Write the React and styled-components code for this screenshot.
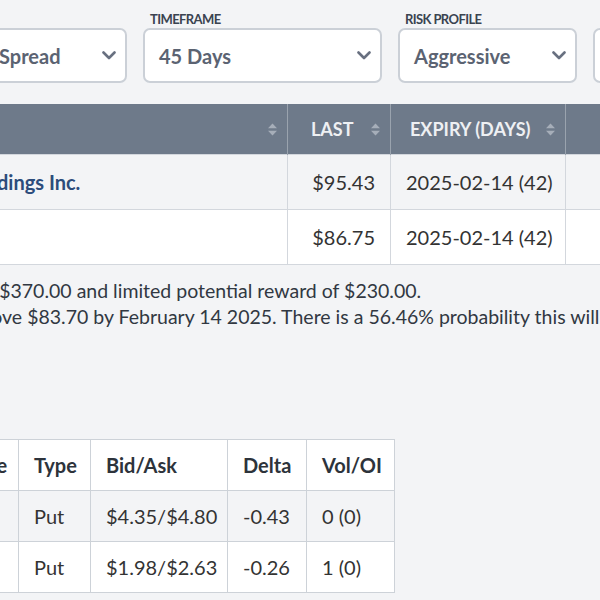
import React from "react";
import styled, { createGlobalStyle } from "styled-components";

const GlobalStyle = createGlobalStyle`
  html, body {
    margin: 0;
    padding: 0;
    background: #f3f4f6;
    overflow: hidden;
  }
  body {
    font-family: Lato, "Liberation Sans", sans-serif;
    color: #333a44;
  }
`;

const Page = styled.div`
  width: 1100px;
  margin-left: -92px;
  padding-top: 11px;
`;

// filters

const FilterRow = styled.div`
  display: flex;
  gap: 16px;
`;

const Field = styled.div`
  width: ${(p) => p.width}px;
  flex: none;
`;

const Label = styled.div`
  font-size: 13px;
  line-height: 16px;
  font-weight: 700;
  color: #3a4350;
  text-transform: uppercase;
  padding-left: 7px;
  height: 16px;
  letter-spacing: -0.6px;
`;

const Select = styled.div`
  margin-top: 1px;
  height: 55px;
  box-sizing: border-box;
  background: #fff;
  border: 2px solid #cbd0d7;
  border-radius: 7px;
  display: flex;
  align-items: center;
  justify-content: space-between;
  padding: 0 9px 0 14px;
  font-size: 20px;
  font-weight: 700;
  color: #5b6372;
  white-space: nowrap;
`;

const Chevron = () => (
  <svg width="14" height="9" viewBox="0 0 14 9">
    <polyline
      points="1.5,1.5 7,7 12.5,1.5"
      fill="none"
      stroke="#687080"
      strokeWidth="2.6"
      strokeLinecap="round"
      strokeLinejoin="round"
    />
  </svg>
);

// quote table

const Table = styled.table`
  border-collapse: collapse;
  table-layout: fixed;
  width: ${(p) => p.width}px;
  margin-top: ${(p) => p.top || 0}px;
  margin-left: ${(p) => p.left || 0}px;
  background: #fff;
`;

const HeadCell = styled.th`
  height: 50px;
  background: #6e7a8a;
  color: #eef0f3;
  font-size: 18px;
  font-weight: 700;
  text-transform: uppercase;
  text-align: left;
  padding: 0 10px 0 ${(p) => p.pad || 19}px;
  border-left: 1px solid #9aa3ae;
  white-space: nowrap;
`;

const HeadInner = styled.div`
  display: flex;
  align-items: center;
  justify-content: space-between;
`;

const SortIcon = () => (
  <svg width="9" height="13" viewBox="0 0 9 13">
    <polygon points="4.5,0.5 9,5.3 0,5.3" fill="#a6aeb9" />
    <polygon points="0,7.7 9,7.7 4.5,12.5" fill="#a6aeb9" />
  </svg>
);

const Row = styled.tr`
  background: ${(p) => (p.striped ? "#f3f4f6" : "#fff")};
  border-top: 1px solid #d3d7dd;
  border-bottom: 1px solid #d3d7dd;
`;

const Cell = styled.td`
  height: 54px;
  padding: 0 15px;
  font-size: 20px;
  color: #333;
  text-align: ${(p) => p.align || "left"};
  border-left: 1px solid #d3d7dd;
  white-space: nowrap;
  overflow: hidden;
`;

const Company = styled.span`
  color: #2c4c7b;
  font-weight: 700;
`;

// summary

const Summary = styled.div`
  margin-top: 13px;
  margin-left: -40px;
  font-size: 19.5px;
  line-height: 26px;
  color: #313842;
  white-space: nowrap;
`;

// legs table

const LegHead = styled.th`
  height: 50px;
  padding: 0 15px;
  text-align: left;
  font-size: 20px;
  font-weight: 700;
  color: #2d333b;
  border: 1px solid #cdd2d8;
  white-space: nowrap;
`;

const LegRow = styled.tr`
  background: ${(p) => (p.striped ? "#f3f4f6" : "#fff")};
`;

const LegCell = styled.td`
  height: 50px;
  padding: 0 15px;
  font-size: 20px;
  color: #333;
  border: 1px solid #cdd2d8;
  white-space: nowrap;
`;

const quoteCols = [379, 103, 175, 200];
const legCols = [128, 72, 137, 79, 88];

const legs = [
  { strike: "$83.70", type: "Put", bidAsk: "$4.35/$4.80", delta: "-0.43", vol: "0 (0)" },
  { strike: "$77.70", type: "Put", bidAsk: "$1.98/$2.63", delta: "-0.26", vol: "1 (0)" },
];

const sum = (arr) => arr.reduce((a, b) => a + b, 0);

export default function App() {
  return (
    <>
      <GlobalStyle />
      <Page>
        <FilterRow>
          <Field width={219}>
            <Label>Strategy</Label>
            <Select>
              Bull Put Spread <Chevron />
            </Select>
          </Field>
          <Field width={239}>
            <Label>Timeframe</Label>
            <Select>
              45 Days <Chevron />
            </Select>
          </Field>
          <Field width={179}>
            <Label>Risk Profile</Label>
            <Select>
              Aggressive <Chevron />
            </Select>
          </Field>
          <Field width={240}>
            <Label>Price Range</Label>
            <Select>
              Any <Chevron />
            </Select>
          </Field>
        </FilterRow>

        <Table top={21} width={sum(quoteCols)}>
          <colgroup>
            {quoteCols.map((w, i) => (
              <col key={i} style={{ width: w }} />
            ))}
          </colgroup>
          <thead>
            <tr>
              <HeadCell>
                <HeadInner>
                  Name <SortIcon />
                </HeadInner>
              </HeadCell>
              <HeadCell pad={23}>
                <HeadInner>
                  Last <SortIcon />
                </HeadInner>
              </HeadCell>
              <HeadCell>
                <HeadInner>
                  Expiry (Days) <SortIcon />
                </HeadInner>
              </HeadCell>
              <HeadCell />
            </tr>
          </thead>
          <tbody>
            <Row striped>
              <Cell>
                <Company>Vita Holdings Inc.</Company>
              </Cell>
              <Cell align="right">$95.43</Cell>
              <Cell>2025-02-14 (42)</Cell>
              <Cell />
            </Row>
            <Row>
              <Cell />
              <Cell align="right">$86.75</Cell>
              <Cell>2025-02-14 (42)</Cell>
              <Cell />
            </Row>
          </tbody>
        </Table>

        <Summary>
          <div>The max risk is $370.00 and limited potential reward of $230.00.</div>
          <div>
            If VHI stays above $83.70 by February 14 2025. There is a 56.46% probability this will happen.
          </div>
        </Summary>

        <Table top={109} left={-18} width={sum(legCols)}>
          <colgroup>
            {legCols.map((w, i) => (
              <col key={i} style={{ width: w }} />
            ))}
          </colgroup>
          <thead>
            <tr>
              <LegHead>Strike Price</LegHead>
              <LegHead>Type</LegHead>
              <LegHead>Bid/Ask</LegHead>
              <LegHead>Delta</LegHead>
              <LegHead>Vol/OI</LegHead>
            </tr>
          </thead>
          <tbody>
            {legs.map((l, i) => (
              <LegRow key={i} striped={i === 0}>
                <LegCell>{l.strike}</LegCell>
                <LegCell>{l.type}</LegCell>
                <LegCell>{l.bidAsk}</LegCell>
                <LegCell>{l.delta}</LegCell>
                <LegCell>{l.vol}</LegCell>
              </LegRow>
            ))}
          </tbody>
        </Table>
      </Page>
    </>
  );
}
